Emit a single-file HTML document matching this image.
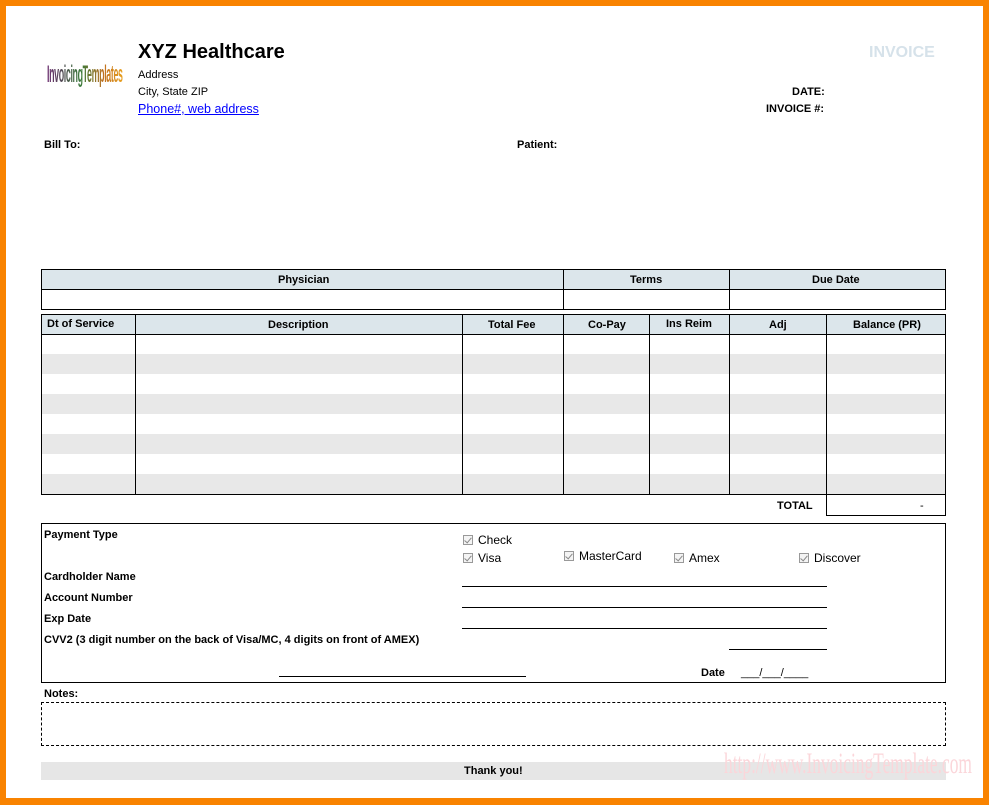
<!DOCTYPE html>
<html><head><style>
*{margin:0;padding:0;box-sizing:border-box}
body{width:989px;height:805px;background:#fff;position:relative;font-family:"Liberation Sans",Arial,sans-serif;font-size:11px;color:#000;overflow:hidden}
.frame{position:absolute;left:0;top:0;width:989px;height:805px;border:6px solid #f98300;border-bottom-width:7px;z-index:5}
.a{position:absolute;white-space:nowrap}
.b{font-weight:bold}
.box{position:absolute;border:1px solid #000}
.hl{position:absolute;height:1px;background:#000}
.vl{position:absolute;width:1px;background:#000}
.hd{position:absolute;background:#dce6eb}
.gr{position:absolute;background:#e8e8e8}
.cb{display:inline-block;width:10px;height:10px;border:1px solid #999;vertical-align:-1px;margin-right:5px;position:relative;background:#f4f4f4}
.cb:after{content:"";position:absolute;left:2px;top:0px;width:3px;height:6px;border:solid #888;border-width:0 1px 1px 0;transform:rotate(40deg)}
</style></head><body>
<div class="frame"></div>
<div class="a b" style="left:47px;top:60px;font-size:24px;line-height:30px;background:linear-gradient(90deg,#6b2c6e,#3a7a3a 45%,#c07020 75%,#e8a020);-webkit-background-clip:text;color:transparent;transform:scaleX(0.37);transform-origin:left;letter-spacing:-1px">InvoicingTemplates</div>
<div class="a b" style="left:138px;top:41px;font-size:20px">XYZ Healthcare</div>
<div class="a" style="left:138px;top:69px">Address</div>
<div class="a" style="left:138px;top:86px">City, State ZIP</div>
<div class="a" style="left:138px;top:102px;font-size:12.5px;color:#00f;text-decoration:underline">Phone#, web address</div>
<div class="a b" style="left:869px;top:44px;font-size:16px;color:#d6e2ea">INVOICE</div>
<div class="a b" style="left:792px;top:86px">DATE:</div>
<div class="a b" style="left:766px;top:103px">INVOICE #:</div>
<div class="a b" style="left:44px;top:139px">Bill To:</div>
<div class="a b" style="left:517px;top:139px">Patient:</div>

<div class="hd" style="left:41px;top:269px;width:905px;height:21px"></div>
<div class="box" style="left:41px;top:269px;width:905px;height:41px"></div>
<div class="hl" style="left:41px;top:289px;width:905px"></div>
<div class="vl" style="left:563px;top:269px;height:41px"></div>
<div class="vl" style="left:729px;top:269px;height:41px"></div>
<div class="a b" style="left:278px;top:274px">Physician</div>
<div class="a b" style="left:630px;top:274px">Terms</div>
<div class="a b" style="left:812px;top:274px">Due Date</div>

<div class="hd" style="left:41px;top:314px;width:905px;height:20px"></div>
<div class="gr" style="left:41px;top:354px;width:905px;height:20px"></div>
<div class="gr" style="left:41px;top:394px;width:905px;height:20px"></div>
<div class="gr" style="left:41px;top:434px;width:905px;height:20px"></div>
<div class="gr" style="left:41px;top:474px;width:905px;height:20px"></div>
<div class="box" style="left:41px;top:314px;width:905px;height:181px"></div>
<div class="hl" style="left:41px;top:334px;width:905px"></div>
<div class="vl" style="left:135px;top:314px;height:181px"></div>
<div class="vl" style="left:462px;top:314px;height:181px"></div>
<div class="vl" style="left:563px;top:314px;height:181px"></div>
<div class="vl" style="left:649px;top:314px;height:181px"></div>
<div class="vl" style="left:729px;top:314px;height:181px"></div>
<div class="vl" style="left:826px;top:314px;height:181px"></div>
<div class="a b" style="left:47px;top:318px">Dt of Service</div>
<div class="a b" style="left:268px;top:319px">Description</div>
<div class="a b" style="left:488px;top:319px">Total Fee</div>
<div class="a b" style="left:588px;top:319px">Co-Pay</div>
<div class="a b" style="left:666px;top:318px">Ins Reim</div>
<div class="a b" style="left:769px;top:319px">Adj</div>
<div class="a b" style="left:853px;top:319px">Balance (PR)</div>
<div class="a b" style="left:777px;top:500px">TOTAL</div>
<div class="box" style="left:826px;top:494px;width:120px;height:22px"></div>
<div class="a" style="left:920px;top:500px">-</div>

<div class="box" style="left:41px;top:523px;width:905px;height:160px"></div>
<div class="a b" style="left:44px;top:529px">Payment Type</div>
<div class="a" style="left:463px;top:533px;font-size:12px"><span class="cb"></span>Check</div>
<div class="a" style="left:463px;top:551px;font-size:12px"><span class="cb"></span>Visa</div>
<div class="a" style="left:564px;top:549px;font-size:12px"><span class="cb"></span>MasterCard</div>
<div class="a" style="left:674px;top:551px;font-size:12px"><span class="cb"></span>Amex</div>
<div class="a" style="left:799px;top:551px;font-size:12px"><span class="cb"></span>Discover</div>
<div class="a b" style="left:44px;top:571px">Cardholder Name</div>
<div class="a b" style="left:44px;top:592px">Account Number</div>
<div class="a b" style="left:44px;top:613px">Exp Date</div>
<div class="a b" style="left:44px;top:634px">CVV2 (3 digit number on the back of Visa/MC, 4 digits on front of AMEX)</div>
<div class="hl" style="left:462px;top:586px;width:365px"></div>
<div class="hl" style="left:462px;top:607px;width:365px"></div>
<div class="hl" style="left:462px;top:628px;width:365px"></div>
<div class="hl" style="left:729px;top:649px;width:98px"></div>
<div class="hl" style="left:279px;top:676px;width:247px"></div>
<div class="a b" style="left:701px;top:667px">Date</div>
<div class="a" style="left:741px;top:667px">___/___/____</div>

<div class="a b" style="left:44px;top:688px">Notes:</div>
<div class="a" style="left:41px;top:702px;width:905px;height:44px;border:1px dashed #000"></div>
<div class="gr" style="left:41px;top:762px;width:905px;height:18px;background:#e6e6e6"></div>
<div class="a b" style="left:464px;top:765px">Thank you!</div>
<div class="a" style="left:724px;top:748px;font-family:'Liberation Serif',serif;font-size:30px;line-height:32px;color:#fbd6da;transform:scaleX(0.58);transform-origin:left">http://www.InvoicingTemplate.com</div>
</body></html>
